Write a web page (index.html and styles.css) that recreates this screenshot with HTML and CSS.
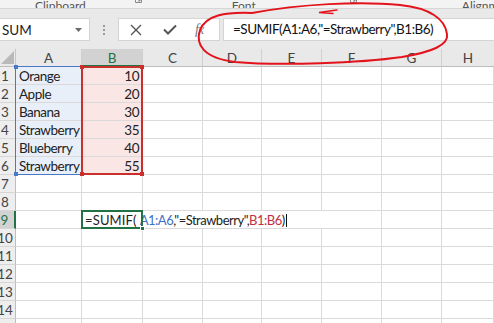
FILE: index.html
```html
<!DOCTYPE html>
<html>
<head>
<meta charset="utf-8">
<link rel="stylesheet" href="styles.css">
</head>
<body>
<div class="app">
  <div class="ribbon">
    <span class="grp grp-clip">Clipboard</span>
    <span class="launch l1"><svg width="7" height="6" viewBox="0 0 7 6"><path d="M0.5 0v5.5h6V0" fill="none" stroke="#8a8a8a"/><path d="M2 1l3 3M5 2v2H3" fill="none" stroke="#8a8a8a"/></svg></span>
    <span class="grp grp-font">Font</span>
    <span class="launch l2"><svg width="7" height="6" viewBox="0 0 7 6"><path d="M0.5 0v5.5h6V0" fill="none" stroke="#8a8a8a"/><path d="M2 1l3 3M5 2v2H3" fill="none" stroke="#8a8a8a"/></svg></span>
    <span class="grp grp-align">Alignment</span>
  </div>
  <div class="fbar">
    <div class="namebox"><span>SUM</span><svg class="dd" width="7" height="4" viewBox="0 0 7 4"><path d="M0 0h7L3.5 4z" fill="#6a6a6a"/></svg></div>
    <div class="grip"><i></i><i></i><i></i></div>
    <div class="fbtns">
      <svg class="xbtn" width="12" height="12" viewBox="0 0 12 12"><path d="M1 1l10 10M11 1L1 11" stroke="#555" stroke-width="1.4" fill="none"/></svg>
      <svg class="okbtn" width="14" height="11" viewBox="0 0 14 11"><path d="M1 5.5l4 4L13 1.5" stroke="#555" stroke-width="2" fill="none"/></svg>
      <span class="fx">fx</span>
    </div>
    <div class="finput">=SUMIF(A1:A6,"=Strawberry",B1:B6)</div>
  </div>
  <div class="sheet">
    <div class="cells">
      <div class="corner"><svg width="14" height="14" viewBox="0 0 14 14"><path d="M14 1V14H1z" fill="#b9b9b9"/></svg></div>
      <div class="ch">A</div>
      <div class="ch sel">B</div>
      <div class="ch">C</div>
      <div class="ch">D</div>
      <div class="ch">E</div>
      <div class="ch">F</div>
      <div class="ch">G</div>
      <div class="ch last">H</div>

      <div class="rh"><span>1</span></div><div class="c a">Orange</div><div class="c b num">10</div><div class="c"></div><div class="c"></div><div class="c"></div><div class="c"></div><div class="c"></div><div class="c"></div>
      <div class="rh"><span>2</span></div><div class="c a">Apple</div><div class="c b num">20</div><div class="c"></div><div class="c"></div><div class="c"></div><div class="c"></div><div class="c"></div><div class="c"></div>
      <div class="rh"><span>3</span></div><div class="c a">Banana</div><div class="c b num">30</div><div class="c"></div><div class="c"></div><div class="c"></div><div class="c"></div><div class="c"></div><div class="c"></div>
      <div class="rh"><span>4</span></div><div class="c a">Strawberry</div><div class="c b num">35</div><div class="c"></div><div class="c"></div><div class="c"></div><div class="c"></div><div class="c"></div><div class="c"></div>
      <div class="rh"><span>5</span></div><div class="c a">Blueberry</div><div class="c b num">40</div><div class="c"></div><div class="c"></div><div class="c"></div><div class="c"></div><div class="c"></div><div class="c"></div>
      <div class="rh"><span>6</span></div><div class="c a">Strawberry</div><div class="c b num">55</div><div class="c"></div><div class="c"></div><div class="c"></div><div class="c"></div><div class="c"></div><div class="c"></div>
      <div class="rh"><span>7</span></div><div class="c"></div><div class="c"></div><div class="c"></div><div class="c"></div><div class="c"></div><div class="c"></div><div class="c"></div><div class="c"></div>
      <div class="rh"><span>8</span></div><div class="c"></div><div class="c"></div><div class="c"></div><div class="c"></div><div class="c"></div><div class="c"></div><div class="c"></div><div class="c"></div>
      <div class="rh sel"><span>9</span></div><div class="c"></div><div class="c"></div><div class="c"></div><div class="c"></div><div class="c"></div><div class="c"></div><div class="c"></div><div class="c"></div>
      <div class="rh"><span>10</span></div><div class="c"></div><div class="c"></div><div class="c"></div><div class="c"></div><div class="c"></div><div class="c"></div><div class="c"></div><div class="c"></div>
      <div class="rh"><span>11</span></div><div class="c"></div><div class="c"></div><div class="c"></div><div class="c"></div><div class="c"></div><div class="c"></div><div class="c"></div><div class="c"></div>
      <div class="rh"><span>12</span></div><div class="c"></div><div class="c"></div><div class="c"></div><div class="c"></div><div class="c"></div><div class="c"></div><div class="c"></div><div class="c"></div>
      <div class="rh"><span>13</span></div><div class="c"></div><div class="c"></div><div class="c"></div><div class="c"></div><div class="c"></div><div class="c"></div><div class="c"></div><div class="c"></div>
      <div class="rh"><span>14</span></div><div class="c"></div><div class="c"></div><div class="c"></div><div class="c"></div><div class="c"></div><div class="c"></div><div class="c"></div><div class="c"></div>
      <div class="rh"><span>15</span></div><div class="c"></div><div class="c"></div><div class="c"></div><div class="c"></div><div class="c"></div><div class="c"></div><div class="c"></div><div class="c"></div>
    </div>
    <div class="overlay">
      <div class="range-a"><i class="sq tl"></i><i class="sq bl"></i></div>
      <div class="range-b"><i class="sq tl"></i><i class="sq tr"></i><i class="sq bl"></i><i class="sq br"></i></div>
      <div class="edit"><span class="fn">=SUMIF(</span><span class="ref-a">A1:A6</span>,"=Strawberry",<span class="ref-b">B1:B6</span>)<span class="caret"></span></div>
      <div class="active"><i class="handle"></i></div>
    </div>
  </div>
  <svg class="circle" width="494" height="80" viewBox="0 0 494 80">
    <path d="M252 13 C225 12, 206 15, 200 30 C195 45, 204 58, 235 62 C280 66, 360 63, 402 57 C432 52, 449 45, 447 34 C445 19, 430 8, 400 5 C360 1, 300 4, 252 13" fill="none" stroke="#e3131b" stroke-width="2" stroke-linecap="round"/>
    <path d="M337 10 L319 12.5 L333 13.5" fill="none" stroke="#e3131b" stroke-width="1.4" stroke-linecap="round"/>
  </svg>
</div>
</body>
</html>
```
FILE: styles.css
```css
* { box-sizing: border-box; margin: 0; padding: 0; }
html, body { width: 494px; height: 323px; overflow: hidden; background: #fff; }
body { font-family: "Lato", "Liberation Sans", sans-serif; color: #262626; }
.app { position: relative; width: 494px; height: 323px; overflow: hidden; }

.ribbon {
  position: relative;
  height: 9px;
  background: #f3f3f3;
  border-bottom: 1px solid #d6d6d6;
  font-size: 12px;
  color: #555;
  overflow: hidden;
  display: flex;
  align-items: flex-end;
}
.grp { display: block; line-height: 12px; margin-bottom: -4px; white-space: nowrap; }
.grp-clip { margin-left: 35px; }
.launch { display: block; margin-bottom: 2px; }
.l1 { margin-left: 49px; }
.grp-font { margin-left: 90px; }
.l2 { margin-left: 94px; }
.grp-align { margin-left: 105px; }

.fbar {
  height: 40px;
  background: #e9e9e9;
  display: flex;
  align-items: flex-start;
  padding-top: 9px;
}
.namebox {
  width: 90px; height: 23px;
  background: #fff;
  border: 1px solid #d4d4d4;
  border-left: none;
  display: flex; align-items: center; justify-content: space-between;
  padding: 0 7px 0 2px;
  font-size: 13.5px; color: #222;
}
.grip { width: 28px; height: 23px; display: flex; flex-direction: column; align-items: center; justify-content: center; gap: 2px; }
.grip i { display: block; width: 2px; height: 2px; background: #9a9a9a; }
.fbtns {
  width: 102px; height: 23px;
  background: #fff;
  border: 1px solid #d4d4d4;
  display: flex; align-items: center;
  padding-left: 11px;
}
.xbtn { margin-right: 21px; }
.okbtn { margin-right: 18px; }
.fx { font-family: "Liberation Serif", serif; font-style: italic; font-size: 14px; color: #777; letter-spacing: -1px; }
.finput {
  flex: 1; height: 23px; margin-left: 3px;
  background: #fff;
  border: 1px solid #d4d4d4; border-right: none;
  font-size: 13.5px; color: #111;
  letter-spacing: -0.5px;
  line-height: 21px;
  padding-left: 9px;
  white-space: nowrap;
}

.sheet { display: grid; font-size: 13.5px; }
.cells, .overlay {
  grid-area: 1 / 1;
  display: grid;
  grid-template-columns: 16px 66px 61px 60px 59px 60px 60px 60px 1fr;
  grid-template-rows: repeat(16, 18px);
}
.overlay { pointer-events: none; }
.corner { background: #e9e9e9; border-right: 1px solid #c6c6c6; border-bottom: 1px solid #bdbdbd; display: flex; align-items: flex-end; padding-bottom: 2px; }
.ch {
  background: #e9e9e9;
  border-right: 1px solid #d0d0d0;
  border-bottom: 1px solid #bdbdbd;
  display: flex; align-items: center; justify-content: center;
  color: #444; font-size: 13.5px;
  padding-top: 1px;
}
.ch.last { border-right: none; }
.ch.sel { background: #d2d2d2; color: #217346; border-bottom: 2px solid #217346; }
.rh {
  background: #eeeeee;
  border-right: 1px solid #bdbdbd;
  border-bottom: 1px solid #d6d6d6;
  display: flex; align-items: center; justify-content: center;
  padding: 1px 5px 0 0;
  overflow: hidden;
  color: #444; font-size: 13.5px;
}
.rh span { white-space: nowrap; }
.rh.sel { background: #d2d2d2; color: #217346; border-right: 2px solid #217346; }
.c {
  border-right: 1px solid #dadada;
  border-bottom: 1px solid #dadada;
  padding: 1px 3px 0;
  line-height: 17px;
  white-space: nowrap;
  overflow: hidden;
  color: #222;
  letter-spacing: -0.5px;
}
.c.a { background: #e8eff9; }
.c.b { background: #fbe6e6; }
.c.num { text-align: right; }

.range-a, .range-b { position: relative; grid-row: 2 / 8; }
.range-a { grid-column: 2; margin-left: -1px; margin-top: -1px; border: 1px solid #4a78c8; border-right: none; }
.range-b { grid-column: 3; margin-left: -1px; margin-top: -1px; border: 2px solid #c9302c; }
.sq { position: absolute; width: 4px; height: 4px; }
.range-a .sq { background: #4a78c8; }
.range-b .sq { background: #c9302c; }
.range-a .tl { left: -2px; top: -2px; }
.range-a .bl { left: -2px; bottom: -2px; }
.range-b .tl { left: -3px; top: -3px; }
.range-b .tr { right: -3px; top: -3px; }
.range-b .bl { left: -3px; bottom: -3px; }
.range-b .br { right: -3px; bottom: -3px; }

.edit {
  grid-column: 3 / 7; grid-row: 10;
  height: 17px;
  background: #fff;
  padding: 1px 0 0 3px;
  line-height: 16px;
  font-size: 13px;
  white-space: nowrap;
  color: #222;
  letter-spacing: -0.5px;
  position: relative;
}
.edit .fn { letter-spacing: 0.15px; margin-right: 3px; }
.ref-a { color: #3d6fc4; }
.ref-b { color: #c62d42; }
.caret { display: inline-block; width: 1px; height: 13px; background: #111; vertical-align: -2px; margin-left: 1px; }
.active {
  grid-column: 3; grid-row: 10;
  margin: -1px 0 0 -1px;
  border: 2px solid #217346;
  position: relative;
}
.handle { position: absolute; right: -4px; bottom: -4px; width: 5px; height: 5px; background: #217346; border: 1px solid #fff; }

.circle { position: absolute; left: 0; top: 0; pointer-events: none; }
```
